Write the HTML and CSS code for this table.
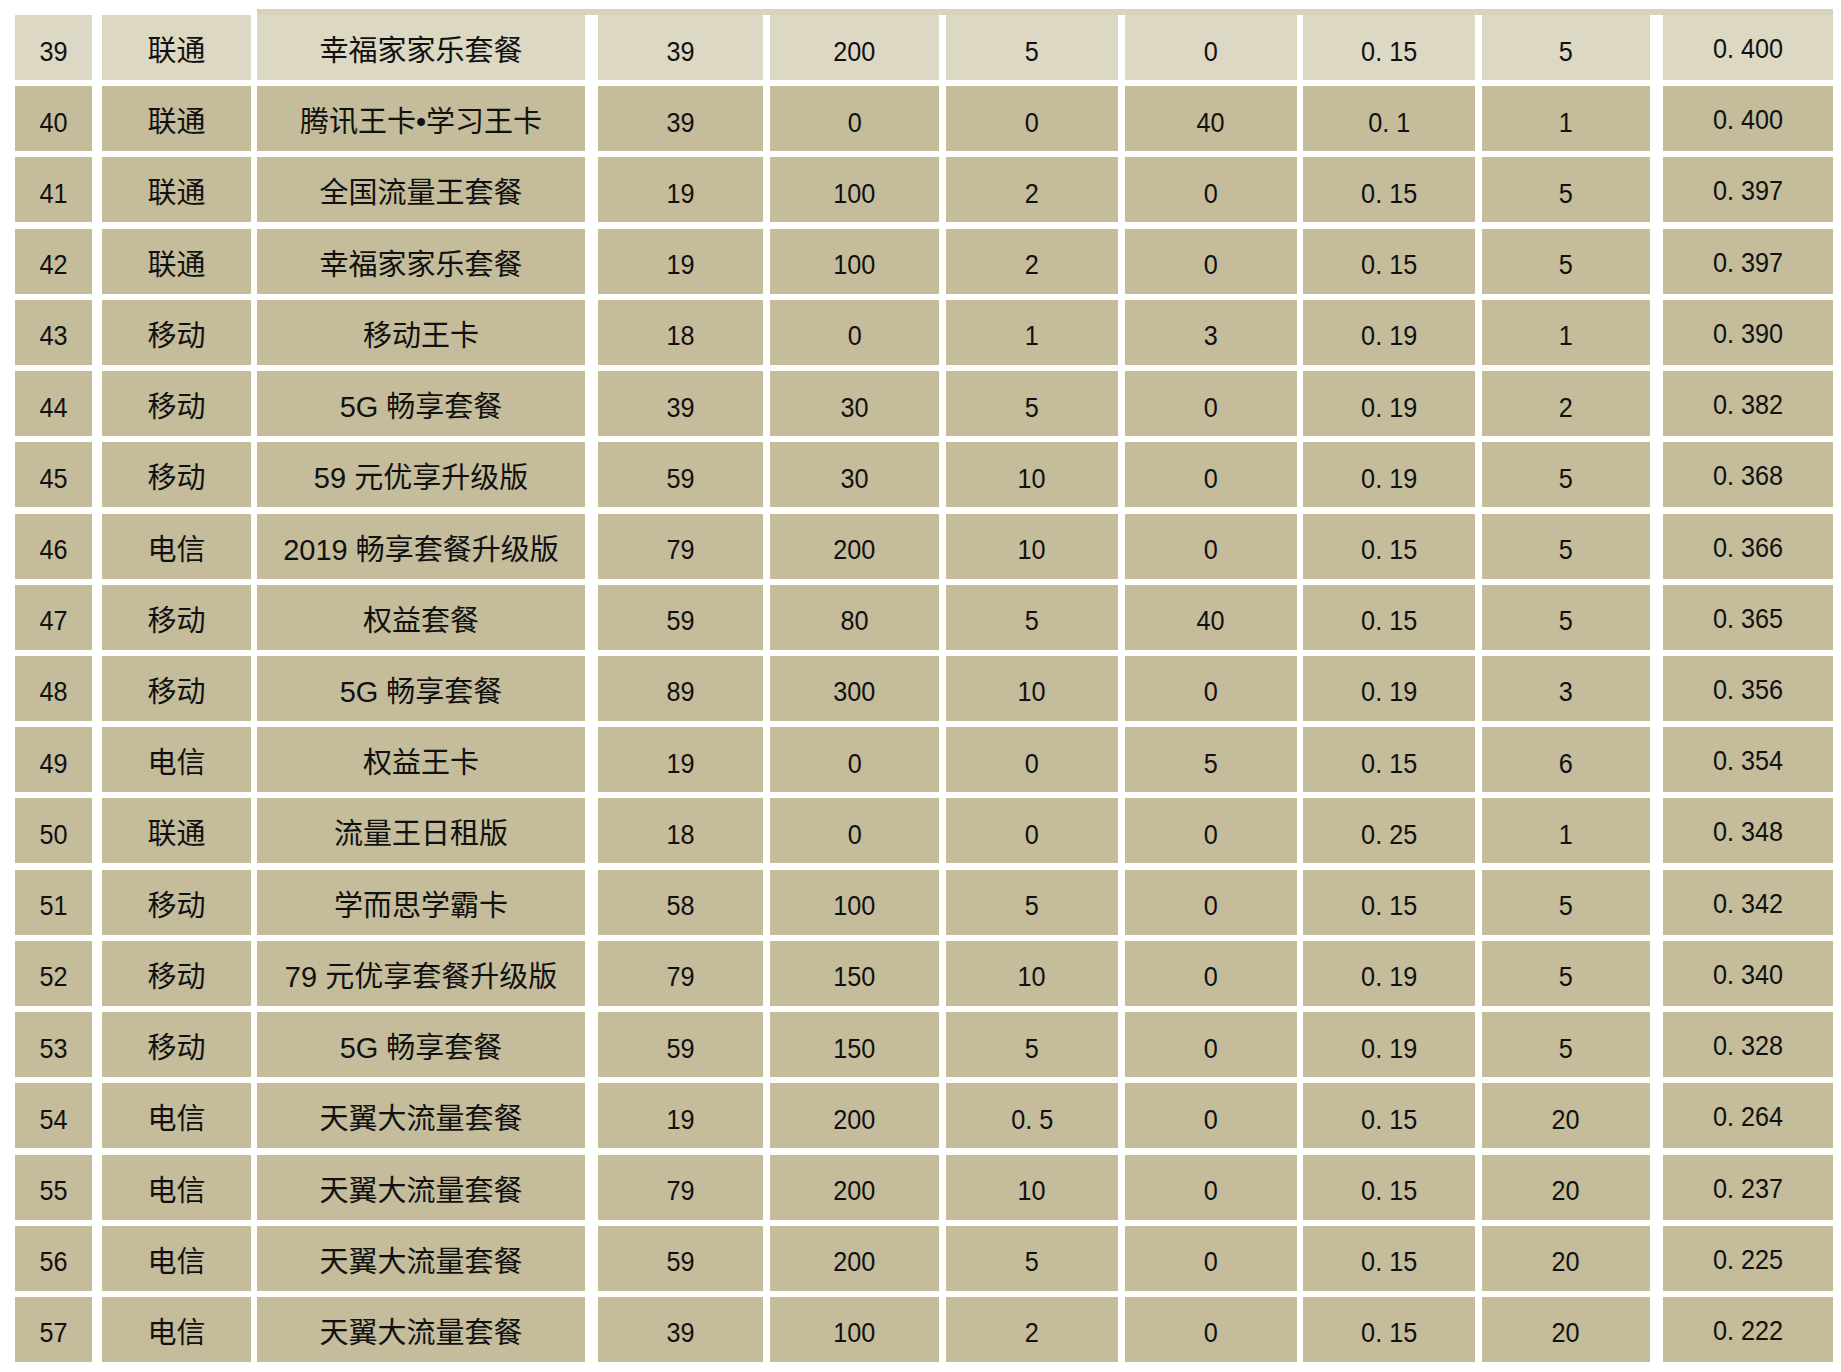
FILE: index.html
```html
<!DOCTYPE html>
<html lang="zh-CN">
<head>
<meta charset="utf-8">
<title>套餐排名</title>
<link rel="stylesheet" href="styles.css">
</head>
<body>
<div class="page">
  <div class="strip"></div>
  <div class="table">
    <div class="cell c1 light"><span class="n">39</span></div><div class="cell c2 light">联通</div><div class="cell c3 light">幸福家家乐套餐</div><div class="cell c4 light"><span class="n">39</span></div><div class="cell c5 light"><span class="n">200</span></div><div class="cell c6 light"><span class="n">5</span></div><div class="cell c7 light"><span class="n">0</span></div><div class="cell c8 light"><span class="n">0. 15</span></div><div class="cell c9 light"><span class="n">5</span></div><div class="cell c10 light"><span class="n">0. 400</span></div>
    <div class="cell c1"><span class="n">40</span></div><div class="cell c2">联通</div><div class="cell c3">腾讯王卡•学习王卡</div><div class="cell c4"><span class="n">39</span></div><div class="cell c5"><span class="n">0</span></div><div class="cell c6"><span class="n">0</span></div><div class="cell c7"><span class="n">40</span></div><div class="cell c8"><span class="n">0. 1</span></div><div class="cell c9"><span class="n">1</span></div><div class="cell c10"><span class="n">0. 400</span></div>
    <div class="cell c1"><span class="n">41</span></div><div class="cell c2">联通</div><div class="cell c3">全国流量王套餐</div><div class="cell c4"><span class="n">19</span></div><div class="cell c5"><span class="n">100</span></div><div class="cell c6"><span class="n">2</span></div><div class="cell c7"><span class="n">0</span></div><div class="cell c8"><span class="n">0. 15</span></div><div class="cell c9"><span class="n">5</span></div><div class="cell c10"><span class="n">0. 397</span></div>
    <div class="cell c1"><span class="n">42</span></div><div class="cell c2">联通</div><div class="cell c3">幸福家家乐套餐</div><div class="cell c4"><span class="n">19</span></div><div class="cell c5"><span class="n">100</span></div><div class="cell c6"><span class="n">2</span></div><div class="cell c7"><span class="n">0</span></div><div class="cell c8"><span class="n">0. 15</span></div><div class="cell c9"><span class="n">5</span></div><div class="cell c10"><span class="n">0. 397</span></div>
    <div class="cell c1"><span class="n">43</span></div><div class="cell c2">移动</div><div class="cell c3">移动王卡</div><div class="cell c4"><span class="n">18</span></div><div class="cell c5"><span class="n">0</span></div><div class="cell c6"><span class="n">1</span></div><div class="cell c7"><span class="n">3</span></div><div class="cell c8"><span class="n">0. 19</span></div><div class="cell c9"><span class="n">1</span></div><div class="cell c10"><span class="n">0. 390</span></div>
    <div class="cell c1"><span class="n">44</span></div><div class="cell c2">移动</div><div class="cell c3">5G 畅享套餐</div><div class="cell c4"><span class="n">39</span></div><div class="cell c5"><span class="n">30</span></div><div class="cell c6"><span class="n">5</span></div><div class="cell c7"><span class="n">0</span></div><div class="cell c8"><span class="n">0. 19</span></div><div class="cell c9"><span class="n">2</span></div><div class="cell c10"><span class="n">0. 382</span></div>
    <div class="cell c1"><span class="n">45</span></div><div class="cell c2">移动</div><div class="cell c3">59 元优享升级版</div><div class="cell c4"><span class="n">59</span></div><div class="cell c5"><span class="n">30</span></div><div class="cell c6"><span class="n">10</span></div><div class="cell c7"><span class="n">0</span></div><div class="cell c8"><span class="n">0. 19</span></div><div class="cell c9"><span class="n">5</span></div><div class="cell c10"><span class="n">0. 368</span></div>
    <div class="cell c1"><span class="n">46</span></div><div class="cell c2">电信</div><div class="cell c3">2019 畅享套餐升级版</div><div class="cell c4"><span class="n">79</span></div><div class="cell c5"><span class="n">200</span></div><div class="cell c6"><span class="n">10</span></div><div class="cell c7"><span class="n">0</span></div><div class="cell c8"><span class="n">0. 15</span></div><div class="cell c9"><span class="n">5</span></div><div class="cell c10"><span class="n">0. 366</span></div>
    <div class="cell c1"><span class="n">47</span></div><div class="cell c2">移动</div><div class="cell c3">权益套餐</div><div class="cell c4"><span class="n">59</span></div><div class="cell c5"><span class="n">80</span></div><div class="cell c6"><span class="n">5</span></div><div class="cell c7"><span class="n">40</span></div><div class="cell c8"><span class="n">0. 15</span></div><div class="cell c9"><span class="n">5</span></div><div class="cell c10"><span class="n">0. 365</span></div>
    <div class="cell c1"><span class="n">48</span></div><div class="cell c2">移动</div><div class="cell c3">5G 畅享套餐</div><div class="cell c4"><span class="n">89</span></div><div class="cell c5"><span class="n">300</span></div><div class="cell c6"><span class="n">10</span></div><div class="cell c7"><span class="n">0</span></div><div class="cell c8"><span class="n">0. 19</span></div><div class="cell c9"><span class="n">3</span></div><div class="cell c10"><span class="n">0. 356</span></div>
    <div class="cell c1"><span class="n">49</span></div><div class="cell c2">电信</div><div class="cell c3">权益王卡</div><div class="cell c4"><span class="n">19</span></div><div class="cell c5"><span class="n">0</span></div><div class="cell c6"><span class="n">0</span></div><div class="cell c7"><span class="n">5</span></div><div class="cell c8"><span class="n">0. 15</span></div><div class="cell c9"><span class="n">6</span></div><div class="cell c10"><span class="n">0. 354</span></div>
    <div class="cell c1"><span class="n">50</span></div><div class="cell c2">联通</div><div class="cell c3">流量王日租版</div><div class="cell c4"><span class="n">18</span></div><div class="cell c5"><span class="n">0</span></div><div class="cell c6"><span class="n">0</span></div><div class="cell c7"><span class="n">0</span></div><div class="cell c8"><span class="n">0. 25</span></div><div class="cell c9"><span class="n">1</span></div><div class="cell c10"><span class="n">0. 348</span></div>
    <div class="cell c1"><span class="n">51</span></div><div class="cell c2">移动</div><div class="cell c3">学而思学霸卡</div><div class="cell c4"><span class="n">58</span></div><div class="cell c5"><span class="n">100</span></div><div class="cell c6"><span class="n">5</span></div><div class="cell c7"><span class="n">0</span></div><div class="cell c8"><span class="n">0. 15</span></div><div class="cell c9"><span class="n">5</span></div><div class="cell c10"><span class="n">0. 342</span></div>
    <div class="cell c1"><span class="n">52</span></div><div class="cell c2">移动</div><div class="cell c3">79 元优享套餐升级版</div><div class="cell c4"><span class="n">79</span></div><div class="cell c5"><span class="n">150</span></div><div class="cell c6"><span class="n">10</span></div><div class="cell c7"><span class="n">0</span></div><div class="cell c8"><span class="n">0. 19</span></div><div class="cell c9"><span class="n">5</span></div><div class="cell c10"><span class="n">0. 340</span></div>
    <div class="cell c1"><span class="n">53</span></div><div class="cell c2">移动</div><div class="cell c3">5G 畅享套餐</div><div class="cell c4"><span class="n">59</span></div><div class="cell c5"><span class="n">150</span></div><div class="cell c6"><span class="n">5</span></div><div class="cell c7"><span class="n">0</span></div><div class="cell c8"><span class="n">0. 19</span></div><div class="cell c9"><span class="n">5</span></div><div class="cell c10"><span class="n">0. 328</span></div>
    <div class="cell c1"><span class="n">54</span></div><div class="cell c2">电信</div><div class="cell c3">天翼大流量套餐</div><div class="cell c4"><span class="n">19</span></div><div class="cell c5"><span class="n">200</span></div><div class="cell c6"><span class="n">0. 5</span></div><div class="cell c7"><span class="n">0</span></div><div class="cell c8"><span class="n">0. 15</span></div><div class="cell c9"><span class="n">20</span></div><div class="cell c10"><span class="n">0. 264</span></div>
    <div class="cell c1"><span class="n">55</span></div><div class="cell c2">电信</div><div class="cell c3">天翼大流量套餐</div><div class="cell c4"><span class="n">79</span></div><div class="cell c5"><span class="n">200</span></div><div class="cell c6"><span class="n">10</span></div><div class="cell c7"><span class="n">0</span></div><div class="cell c8"><span class="n">0. 15</span></div><div class="cell c9"><span class="n">20</span></div><div class="cell c10"><span class="n">0. 237</span></div>
    <div class="cell c1"><span class="n">56</span></div><div class="cell c2">电信</div><div class="cell c3">天翼大流量套餐</div><div class="cell c4"><span class="n">59</span></div><div class="cell c5"><span class="n">200</span></div><div class="cell c6"><span class="n">5</span></div><div class="cell c7"><span class="n">0</span></div><div class="cell c8"><span class="n">0. 15</span></div><div class="cell c9"><span class="n">20</span></div><div class="cell c10"><span class="n">0. 225</span></div>
    <div class="cell c1"><span class="n">57</span></div><div class="cell c2">电信</div><div class="cell c3">天翼大流量套餐</div><div class="cell c4"><span class="n">39</span></div><div class="cell c5"><span class="n">100</span></div><div class="cell c6"><span class="n">2</span></div><div class="cell c7"><span class="n">0</span></div><div class="cell c8"><span class="n">0. 15</span></div><div class="cell c9"><span class="n">20</span></div><div class="cell c10"><span class="n">0. 222</span></div>
  </div>
</div>
</body>
</html>
```

FILE: styles.css
```css
html, body {
  margin: 0;
  padding: 0;
  background: #ffffff;
}

.page {
  padding: 9px 0 0 15px;
}

.strip {
  margin-left: 242px;
  width: 1576px;
  height: 6px;
  background: #d7d3bf;
}

.table {
  display: grid;
  grid-template-columns: 77px 159px 334px 178px 176px 179px 179px 178px 175px 183px;
  grid-auto-rows: 65px;
  row-gap: 6.22px;
  font-family: "Liberation Sans", "Noto Sans CJK SC", sans-serif;
  font-size: 29px;
  line-height: 1;
  color: #111111;
}

.cell {
  display: flex;
  align-items: center;
  justify-content: center;
  background: #c4bc9a;
  padding-top: 8px;
  box-sizing: border-box;
  white-space: pre;
}

.cell.light {
  background: #ddd8c4;
}

.n {
  display: inline-block;
  font-size: 28px;
  transform: scaleX(0.9);
}

.c2 { margin-left: 10px; }
.c3 { margin-left: 6px; }
.c4 { margin-left: 13px; }
.c5 { margin-left: 7px; }
.c6 { margin-left: 7px; }
.c7 { margin-left: 7px; }
.c8 { margin-left: 6px; }
.c9 { margin-left: 7px; }
.c10 { margin-left: 13px; padding-top: 3px; }
```
